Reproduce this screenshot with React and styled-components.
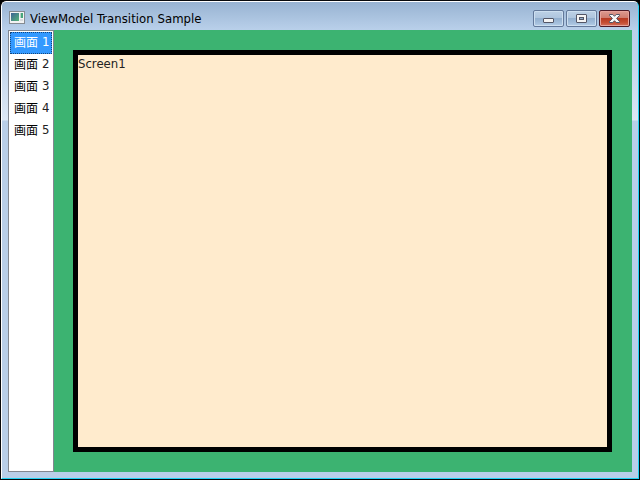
import React from "react";
import styled, { createGlobalStyle } from "styled-components";

const Global = createGlobalStyle`
  * { box-sizing: border-box; }
  body { margin: 0; background: #000; overflow: hidden; }
`;

const Window = styled.div`
  width: 640px;
  height: 480px;
  display: flex;
  flex-direction: column;
  border: 1px solid #08090c;
  border-radius: 6px 6px 0 0;
  overflow: hidden;
  background: #000;
  font-family: "DejaVu Sans Condensed", "DejaVu Sans", "Noto Sans CJK JP", sans-serif;
  font-stretch: condensed;
  color: #222;
`;

const Frame = styled.div`
  flex: 1;
  min-height: 0;
  display: flex;
  flex-direction: column;
  border: 1px solid #fff;
  border-right-color: #21d3f5;
  border-bottom-color: #21d3f5;
  border-radius: 5px 5px 0 0;
  padding: 0 6px 6px;
  background:
    linear-gradient(#98b3d2 0, #b9d0ea 28px, #c3d6ec 60px, #dce7f4 118px, #b9cfe9 119px, #b9cfe9 100%);
`;

const TitleBar = styled.header`
  height: 28px;
  flex: none;
  display: flex;
  align-items: flex-start;
  padding: 0 2px 0 1px;
`;

const AppIcon = styled.svg`
  display: block;
  margin: 9px 5px 0 0;
`;

const Title = styled.h1`
  flex: 1;
  margin: 8px 0 0;
  font-size: 13px;
  line-height: 17px;
  font-weight: 400;
  letter-spacing: 0.04px;
  color: #000;
  white-space: nowrap;
`;

const Controls = styled.div`
  display: flex;
  gap: 2px;
  margin-top: 8px;
`;

const Control = styled.button`
  width: 31px;
  height: 17px;
  padding: 0;
  display: flex;
  align-items: center;
  justify-content: center;
  border: 1px solid ${(p) => (p.$close ? "#4c1a26" : "#63799a")};
  border-radius: 2px;
  box-shadow: inset 0 0 0 1px ${(p) => (p.$close ? "#e6a39b" : "#cddff0")};
  background: ${(p) =>
    p.$close
      ? "linear-gradient(#dc9b91 0, #cf7c6e 47%, #b83b23 50%, #c34b31 75%, #d5705b 100%)"
      : "linear-gradient(#bdd1e6 0, #aec5de 47%, #93b0cf 50%, #a4bfdc 80%, #b7d0e9 100%)"};
`;

const Glyph = styled.svg`
  display: block;
`;

const Client = styled.main`
  flex: 1;
  min-height: 0;
  display: flex;
`;

const ScreenList = styled.ul`
  width: 46px;
  flex: none;
  margin: 0;
  padding: 1px;
  list-style: none;
  background: #fff;
  border: 1px solid #828790;
`;

const ScreenItem = styled.li`
  height: 22px;
  padding: 0 0 2px 3px;
  display: flex;
  align-items: center;
  gap: 4px;
  font-size: 12px;
  line-height: 18px;
  white-space: nowrap;
  border: 1px ${(p) => (p.$selected ? "dotted #14467c" : "solid transparent")};
  background: ${(p) => (p.$selected ? "#3399ff" : "transparent")};
  color: ${(p) => (p.$selected ? "#fff" : "#000")};
`;

const Kanji = styled.span`
  font-family: "Noto Sans CJK JP", sans-serif;
`;

const Digit = styled.span`
  font-size: 13px;
  color: ${(p) => (p.$selected ? "#fff" : "#222")};
`;

const Backdrop = styled.section`
  flex: 1;
  display: flex;
  padding: 20px 20px 20px 19px;
  background: #3cb371;
`;

const Screen = styled.div`
  flex: 1;
  border: 5px solid #000;
  background: #ffebcd;
  font-size: 13px;
  line-height: 17px;
`;

const screens = [1, 2, 3, 4, 5];

export default function App() {
  const selected = 1;
  return (
    <>
      <Global />
      <Window>
        <Frame>
          <TitleBar>
            <AppIcon width="16" height="13" viewBox="0 0 16 13" shapeRendering="crispEdges">
              <defs>
                <linearGradient id="pane" x1="0" y1="0" x2="1" y2="1">
                  <stop offset="0" stopColor="#3d6396" />
                  <stop offset="1" stopColor="#55b578" />
                </linearGradient>
              </defs>
              <rect x=".5" y=".5" width="15" height="12" fill="#f2f3f3" stroke="#858b91" />
              <rect x="2" y="2" width="8" height="8" fill="url(#pane)" />
              <rect x="11" y="2" width="1" height="5" fill="#b9cfc6" />
              <rect x="12" y="2" width="2" height="5" fill="#47a77b" />
              <rect x="11" y="8" width="3" height="2" fill="#d8dcde" />
            </AppIcon>
            <Title>ViewModel Transition Sample</Title>
            <Controls>
              <Control aria-label="Minimize">
                <Glyph width="11" height="9" viewBox="0 0 11 9">
                  <rect x=".5" y="4.5" width="10" height="4" rx=".5" fill="#f4f4f4" stroke="#535666" />
                </Glyph>
              </Control>
              <Control aria-label="Maximize">
                <Glyph width="11" height="9" viewBox="0 0 11 9">
                  <rect x=".5" y=".5" width="10" height="8" rx=".5" fill="#f4f4f4" stroke="#535666" />
                  <rect x="3.5" y="3.5" width="4" height="2" fill="#91aeca" stroke="#535666" />
                </Glyph>
              </Control>
              <Control $close aria-label="Close">
                <Glyph width="11" height="9" viewBox="0 0 11 9">
                  <path
                    d="M.5 .5H3.8L5.5 2.3 7.2 .5H10.5V1.5L7.6 4.5 10.5 7.5V8.5H7.2L5.5 6.7 3.8 8.5H.5V7.5L3.4 4.5 .5 1.5Z"
                    fill="#f7f7f7"
                    stroke="#535666"
                    strokeLinejoin="round"
                  />
                </Glyph>
              </Control>
            </Controls>
          </TitleBar>
          <Client>
            <ScreenList>
              {screens.map((n) => (
                <ScreenItem key={n} $selected={n === selected}>
                  <Kanji>画面</Kanji>
                  <Digit $selected={n === selected}>{n}</Digit>
                </ScreenItem>
              ))}
            </ScreenList>
            <Backdrop>
              <Screen>Screen1</Screen>
            </Backdrop>
          </Client>
        </Frame>
      </Window>
    </>
  );
}
